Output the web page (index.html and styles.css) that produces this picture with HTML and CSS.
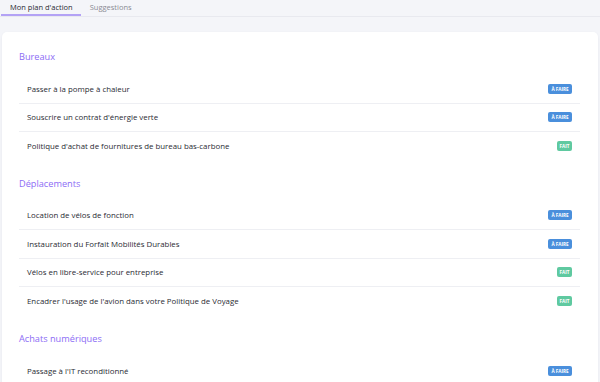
FILE: index.html
```html
<!DOCTYPE html>
<html lang="fr">
<head>
<meta charset="utf-8">
<link rel="stylesheet" href="styles.css">
</head>
<body>
<nav class="tabs">
  <div class="tab active">Mon plan d'action</div>
  <div class="tab">Suggestions</div>
</nav>
<main class="card">
  <section class="section">
    <h2 class="section-title">Bureaux</h2>
    <ul class="list">
      <li class="row"><span>Passer à la pompe à chaleur</span><span class="badge todo">À faire</span></li>
      <li class="row"><span>Souscrire un contrat d'énergie verte</span><span class="badge todo">À faire</span></li>
      <li class="row"><span>Politique d'achat de fournitures de bureau bas-carbone</span><span class="badge done">Fait</span></li>
    </ul>
  </section>
  <section class="section">
    <h2 class="section-title">Déplacements</h2>
    <ul class="list">
      <li class="row"><span>Location de vélos de fonction</span><span class="badge todo">À faire</span></li>
      <li class="row"><span>Instauration du Forfait Mobilités Durables</span><span class="badge todo">À faire</span></li>
      <li class="row"><span>Vélos en libre-service pour entreprise</span><span class="badge done">Fait</span></li>
      <li class="row"><span>Encadrer l'usage de l'avion dans votre Politique de Voyage</span><span class="badge done">Fait</span></li>
    </ul>
  </section>
  <section class="section">
    <h2 class="section-title">Achats numériques</h2>
    <ul class="list">
      <li class="row"><span>Passage à l'IT reconditionné</span><span class="badge todo">À faire</span></li>
    </ul>
  </section>
</main>
</body>
</html>
```
FILE: styles.css
```css
* { box-sizing: border-box; }
html, body { margin: 0; padding: 0; }
body {
  background: #f4f5f9;
  font-family: "Open Sans", "DejaVu Sans", sans-serif;
  color: #2a2b33;
  width: 600px;
  height: 382px;
  overflow: hidden;
}
.tabs {
  display: flex;
  padding-left: 1px;
  height: 17px;
  border-bottom: 1px solid #e8e9ef;
}
.tab {
  font-size: 7.5px;
  line-height: 15px;
  padding: 0 9px 0 9px;
  color: #8a8b94;
  white-space: nowrap;
  border-bottom: 2px solid transparent;
}
.tab.active {
  color: #2a2b33;
  border-bottom-color: #b3a2f5;
  padding-right: 8px;
}
.card {
  margin: 15px 2px 0 2px;
  background: #fff;
  border-radius: 5px;
  box-shadow: 0 1px 3px rgba(20, 20, 60, 0.06);
  padding: 17px 18px 20px 17px;
}
.section + .section { margin-top: 15px; }
.section-title {
  margin: 0 0 10px 0;
  font-size: 9.2px;
  font-weight: 400;
  line-height: 16px;
  color: #8c6cf5;
}
.list { list-style: none; margin: 0; padding: 0; }
.row {
  display: flex;
  align-items: center;
  justify-content: space-between;
  height: 28.5px;
  padding: 0 8px;
  font-size: 7.85px;
  white-space: nowrap;
  border-bottom: 1px solid #eeeff3;
}
.row:last-child { border-bottom: none; }
.badge {
  display: inline-flex;
  align-items: center;
  justify-content: center;
  height: 10px;
  padding: 0;
  border-radius: 2px;
  font-size: 4.6px;
  font-weight: 700;
  text-transform: uppercase;
  white-space: nowrap;
  color: #fff;
}
.badge.todo { background: #4a8fdc; width: 24px; }
.badge.done { background: #5fc9a0; width: 15px; }
```
